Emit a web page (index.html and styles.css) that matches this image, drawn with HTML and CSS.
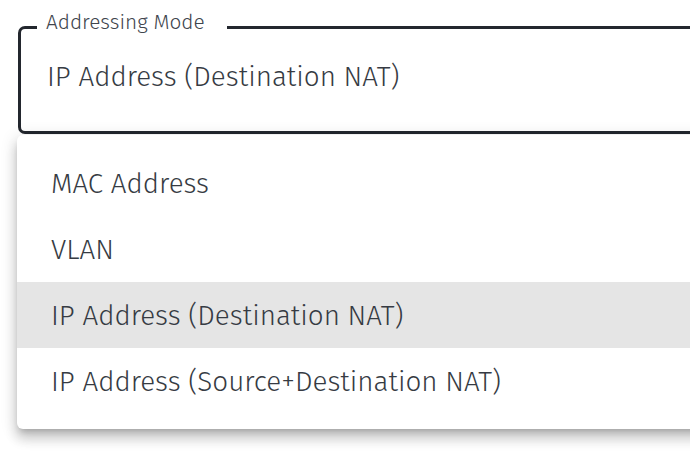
FILE: index.html
```html
<!DOCTYPE html>
<html lang="en">
<head>
<meta charset="utf-8">
<title>Addressing Mode</title>
<link rel="stylesheet" href="styles.css">
</head>
<body>
<div class="wrap">
  <fieldset class="field">
    <legend class="field-label">Addressing Mode</legend>
    <div class="field-value">IP Address (Destination NAT)</div>
  </fieldset>
  <ul class="menu">
    <li class="menu-item">MAC Address</li>
    <li class="menu-item">VLAN</li>
    <li class="menu-item is-selected">IP Address (Destination NAT)</li>
    <li class="menu-item">IP Address (Source+Destination NAT)</li>
  </ul>
</div>
</body>
</html>
```
FILE: styles.css
```css
html, body {
  margin: 0;
  padding: 0;
  background: #ffffff;
  overflow: hidden;
}
body {
  width: 690px;
  height: 454px;
  font-family: "Fira Sans", "Open Sans", "Noto Sans", sans-serif;
  font-weight: 300;
  color: #363b43;
}
.wrap {
  width: 760px;
  padding-top: 11px;
}
.field {
  margin: 0 0 0 18px;
  padding: 0 0 0 16px;
  border: 3px solid #23272e;
  border-radius: 7px;
  height: 117px;
  box-sizing: content-box;
}
.field-label {
  padding: 0 22px 8px 9px;
  font-size: 20.8px;
  line-height: 24px;
  color: #40454d;
}
.field-value {
  padding: 16px 0 0 10px;
  font-size: 27.8px;
  line-height: 36px;
}
.menu {
  list-style: none;
  margin: 1px 0 0 17px;
  padding: 15px 0;
  background: #ffffff;
  border-radius: 6px;
  box-shadow: 0 5px 6px -3px rgba(0,0,0,0.2), 0 10px 12px 1px rgba(0,0,0,0.14), 0 3px 16px 2px rgba(0,0,0,0.12);
}
.menu-item {
  height: 66px;
  display: flex;
  align-items: center;
  padding-left: 34px;
  font-size: 27.8px;
}
.menu-item.is-selected {
  background: #e5e5e5;
}
```
